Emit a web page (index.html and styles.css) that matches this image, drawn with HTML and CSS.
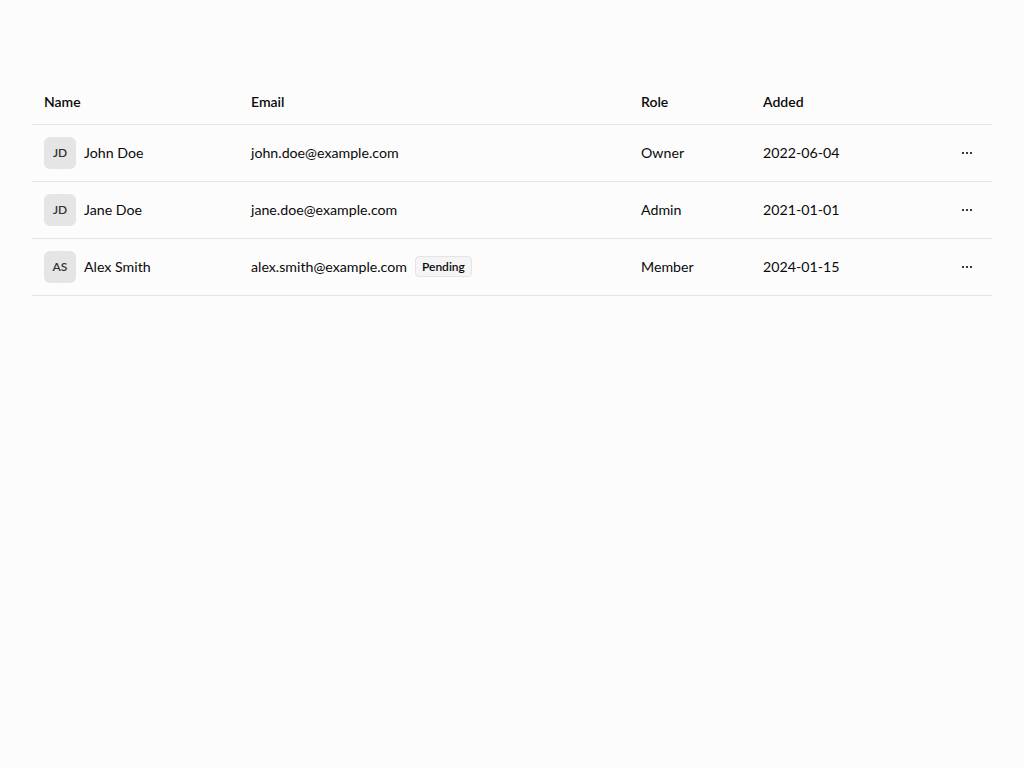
FILE: index.html
```html
<!doctype html>
<html lang="en-US">
  <head>
    <meta charset="utf-8" />
    <title>Members</title>
    <link rel="stylesheet" href="styles.css">
  </head>
  <body>
	<main class="page">
		<table class="members">
			<colgroup>
				<col class="col-name">
				<col class="col-email">
				<col class="col-role">
				<col class="col-added">
				<col class="col-actions">
			</colgroup>
			<thead>
				<tr>
					<th>Name</th>
					<th>Email</th>
					<th>Role</th>
					<th>Added</th>
					<th></th>
				</tr>
			</thead>
			<tbody>
				<tr>
					<td><div class="person"><span class="avatar">JD</span>John Doe</div></td>
					<td>john.doe@example.com</td>
					<td>Owner</td>
					<td>2022-06-04</td>
					<td class="actions"><button class="more" title="More"><svg width="12" height="4" viewBox="0 0 12 4"><circle cx="2" cy="2" r="1.1"/><circle cx="6" cy="2" r="1.1"/><circle cx="10" cy="2" r="1.1"/></svg></button></td>
				</tr>
				<tr>
					<td><div class="person"><span class="avatar">JD</span>Jane Doe</div></td>
					<td>jane.doe@example.com</td>
					<td>Admin</td>
					<td>2021-01-01</td>
					<td class="actions"><button class="more" title="More"><svg width="12" height="4" viewBox="0 0 12 4"><circle cx="2" cy="2" r="1.1"/><circle cx="6" cy="2" r="1.1"/><circle cx="10" cy="2" r="1.1"/></svg></button></td>
				</tr>
				<tr>
					<td><div class="person"><span class="avatar">AS</span>Alex Smith</div></td>
					<td><div class="email">alex.smith@example.com <span class="badge">Pending</span></div></td>
					<td>Member</td>
					<td>2024-01-15</td>
					<td class="actions"><button class="more" title="More"><svg width="12" height="4" viewBox="0 0 12 4"><circle cx="2" cy="2" r="1.1"/><circle cx="6" cy="2" r="1.1"/><circle cx="10" cy="2" r="1.1"/></svg></button></td>
				</tr>
			</tbody>
		</table>
	</main>
  </body>
</html>
```

FILE: styles.css
```css
* {
	box-sizing: border-box;
}

body {
	margin: 0;
	background: #fcfcfc;
	color: #0a0a0a;
	font-family: Lato, "Noto Sans", sans-serif;
	font-size: 14px;
}

.page {
	padding: 79px 32px 32px;
}

table.members {
	width: 100%;
	border-collapse: collapse;
	table-layout: fixed;
}

col.col-name { width: 207px; }
col.col-email { width: 390px; }
col.col-role { width: 122px; }
col.col-added { width: 170px; }

th {
	height: 45px;
	padding: 0 12px;
	text-align: left;
	font-weight: 600;
	font-size: 14px;
	border-bottom: 1px solid #e5e5e5;
}

td {
	height: 57px;
	padding: 0 12px;
	font-size: 14.2px;
	border-bottom: 1px solid #e5e5e5;
	white-space: nowrap;
}

.person, .email {
	display: flex;
	align-items: center;
	gap: 8px;
}

.avatar {
	width: 32px;
	height: 32px;
	border-radius: 6px;
	background: #e5e5e5;
	display: flex;
	align-items: center;
	justify-content: center;
	font-size: 12px;
	font-weight: 600;
	color: #333;
}

.badge {
	display: inline-block;
	padding: 2px 6px;
	border: 1px solid #e5e5e5;
	border-radius: 4px;
	background: #f5f5f5;
	font-size: 12px;
	font-weight: 600;
}

td.actions {
	text-align: right;
	padding-right: 12px;
}

.more {
	width: 26px;
	height: 26px;
	border: none;
	background: none;
	padding: 0;
	display: inline-flex;
	align-items: center;
	justify-content: center;
	vertical-align: middle;
	fill: #0a0a0a;
	cursor: pointer;
}
```
